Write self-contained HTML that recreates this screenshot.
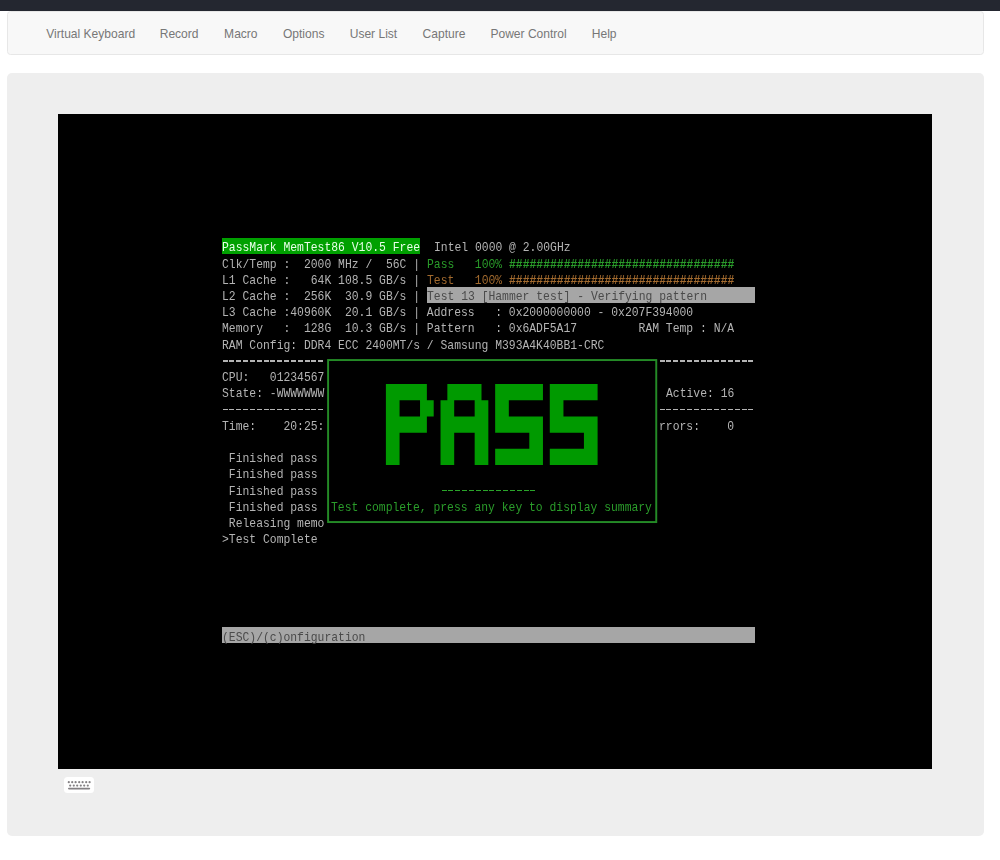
<!DOCTYPE html>
<html><head><meta charset="utf-8">
<style>
html,body{margin:0;padding:0;background:#fff;width:1000px;height:860px;overflow:hidden;position:relative}
#topbar{position:absolute;left:0;top:0;width:1000px;height:10.7px;background:#242730;border-bottom:0 solid #1f212c}
#nav{position:absolute;left:7px;top:10.9px;width:976.5px;height:44.6px;box-sizing:border-box;background:#f8f8f8;border:1px solid #e7e7e7;border-radius:3.5px}
.nl{position:absolute;top:1.5px;height:43px;line-height:43px;font-family:"Liberation Sans",sans-serif;font-size:12.05px;color:#777;white-space:nowrap}
#panel{position:absolute;left:7px;top:72.5px;width:976.5px;height:763.2px;background:#eee;border-radius:5px}
#screen{position:absolute;left:58.2px;top:113.8px;width:874.1px;height:655.4px;background:#000}
.ln{position:absolute;height:16.22px;line-height:16.22px;font-family:"Liberation Mono",monospace;font-size:13.3px;white-space:pre;overflow:visible}
.ln span{display:inline-block;transform-origin:0 0;position:relative;top:2.4px}
#txt{position:absolute;left:0;top:0;width:1000px;height:860px;filter:blur(0.3px)}
#all{position:absolute;left:0;top:0;width:1000px;height:860px}
#kb{position:absolute;left:63.8px;top:777px;width:30.2px;height:15.8px;background:#fff;border-radius:3.5px}
</style></head><body>
<div id="all">
<div id="topbar"></div>
<div id="nav">
<div class="nl" style="left:38.3px">Virtual Keyboard</div>
<div class="nl" style="left:151.7px">Record</div>
<div class="nl" style="left:216.1px">Macro</div>
<div class="nl" style="left:274.9px">Options</div>
<div class="nl" style="left:341.7px">User List</div>
<div class="nl" style="left:414.6px">Capture</div>
<div class="nl" style="left:482.4px">Power Control</div>
<div class="nl" style="left:583.8px">Help</div>
</div>
<div id="panel"></div>
<div id="screen"></div>
<div id="txt">
<div class="ln" style="left:222.00px;top:238.00px;width:198.04px;color:#e8ffe8;background:#00a000;"><span style="transform:scaleX(0.8558)">PassMark&#160;MemTest86&#160;V10.5&#160;Free</span></div>
<div class="ln" style="left:433.70px;top:238.00px;width:136.58px;color:#b4b4b4;"><span style="transform:scaleX(0.8558)">Intel&#160;0000&#160;@&#160;2.00GHz</span></div>
<div class="ln" style="left:222.00px;top:254.22px;width:198.04px;color:#b4b4b4;"><span style="transform:scaleX(0.8558)">Clk/Temp&#160;:&#160;&#160;2000&#160;MHz&#160;/&#160;&#160;56C&#160;|</span></div>
<div class="ln" style="left:426.87px;top:254.22px;width:75.12px;color:#2a9c2a;"><span style="transform:scaleX(0.8558)">Pass&#160;&#160;&#160;100%</span></div>
<div class="ln" style="left:508.82px;top:254.22px;width:225.36px;color:#2a9c2a;font-weight:bold;"><span style="transform:scaleX(0.8558)">#################################</span></div>
<div class="ln" style="left:222.00px;top:270.44px;width:198.04px;color:#b4b4b4;"><span style="transform:scaleX(0.8558)">L1&#160;Cache&#160;:&#160;&#160;&#160;64K&#160;108.5&#160;GB/s&#160;|</span></div>
<div class="ln" style="left:426.87px;top:270.44px;width:75.12px;color:#a26a2e;"><span style="transform:scaleX(0.8558)">Test&#160;&#160;&#160;100%</span></div>
<div class="ln" style="left:508.82px;top:270.44px;width:225.36px;color:#a26a2e;font-weight:bold;"><span style="transform:scaleX(0.8558)">#################################</span></div>
<div class="ln" style="left:222.00px;top:286.66px;width:198.04px;color:#b4b4b4;"><span style="transform:scaleX(0.8558)">L2&#160;Cache&#160;:&#160;&#160;256K&#160;&#160;30.9&#160;GB/s&#160;|</span></div>
<div class="ln" style="left:426.87px;top:286.66px;width:327.79px;color:#4a4a4a;background:#a6a6a6;"><span style="transform:scaleX(0.8558)">Test&#160;13&#160;[Hammer&#160;test]&#160;-&#160;Verifying&#160;pattern&#160;&#160;&#160;&#160;&#160;&#160;&#160;</span></div>
<div class="ln" style="left:222.00px;top:302.88px;width:471.20px;color:#b4b4b4;"><span style="transform:scaleX(0.8558)">L3&#160;Cache&#160;:40960K&#160;&#160;20.1&#160;GB/s&#160;|&#160;Address&#160;&#160;&#160;:&#160;0x2000000000&#160;-&#160;0x207F394000</span></div>
<div class="ln" style="left:222.00px;top:319.10px;width:512.17px;color:#b4b4b4;"><span style="transform:scaleX(0.8558)">Memory&#160;&#160;&#160;:&#160;&#160;128G&#160;&#160;10.3&#160;GB/s&#160;|&#160;Pattern&#160;&#160;&#160;:&#160;0x6ADF5A17&#160;&#160;&#160;&#160;&#160;&#160;&#160;&#160;&#160;RAM&#160;Temp&#160;:&#160;N/A</span></div>
<div class="ln" style="left:222.00px;top:335.32px;width:382.42px;color:#b4b4b4;"><span style="transform:scaleX(0.8558)">RAM&#160;Config:&#160;DDR4&#160;ECC&#160;2400MT/s&#160;/&#160;Samsung&#160;M393A4K40BB1-CRC</span></div>
<div class="ln" style="left:222.00px;top:367.76px;width:102.44px;color:#b4b4b4;"><span style="transform:scaleX(0.8558)">CPU:&#160;&#160;&#160;01234567</span></div>
<div class="ln" style="left:222.00px;top:383.98px;width:102.44px;color:#b4b4b4;"><span style="transform:scaleX(0.8558)">State:&#160;-WWWWWWW</span></div>
<div class="ln" style="left:665.88px;top:383.98px;width:68.29px;color:#b4b4b4;"><span style="transform:scaleX(0.8558)">Active:&#160;16</span></div>
<div class="ln" style="left:222.00px;top:416.42px;width:102.44px;color:#b4b4b4;"><span style="transform:scaleX(0.8558)">Time:&#160;&#160;&#160;&#160;20:25:</span></div>
<div class="ln" style="left:659.06px;top:416.42px;width:75.12px;color:#b4b4b4;"><span style="transform:scaleX(0.8558)">rrors:&#160;&#160;&#160;&#160;0</span></div>
<div class="ln" style="left:222.00px;top:448.86px;width:95.61px;color:#b4b4b4;"><span style="transform:scaleX(0.8558)">&#160;Finished&#160;pass</span></div>
<div class="ln" style="left:222.00px;top:465.08px;width:95.61px;color:#b4b4b4;"><span style="transform:scaleX(0.8558)">&#160;Finished&#160;pass</span></div>
<div class="ln" style="left:222.00px;top:481.30px;width:95.61px;color:#b4b4b4;"><span style="transform:scaleX(0.8558)">&#160;Finished&#160;pass</span></div>
<div class="ln" style="left:222.00px;top:497.52px;width:95.61px;color:#b4b4b4;"><span style="transform:scaleX(0.8558)">&#160;Finished&#160;pass</span></div>
<div class="ln" style="left:222.00px;top:513.74px;width:102.44px;color:#b4b4b4;"><span style="transform:scaleX(0.8558)">&#160;Releasing&#160;memo</span></div>
<div class="ln" style="left:222.00px;top:529.96px;width:95.61px;color:#b4b4b4;"><span style="transform:scaleX(0.8558)">&gt;Test&#160;Complete</span></div>
<div class="ln" style="left:331.26px;top:497.52px;width:320.96px;color:#2a9c2a;"><span style="transform:scaleX(0.8558)">Test&#160;complete,&#160;press&#160;any&#160;key&#160;to&#160;display&#160;summary</span></div>
<div class="ln" style="left:222.00px;top:627.28px;width:532.66px;color:#4a4a4a;background:#a6a6a6;"><span style="transform:scaleX(0.8558)">(ESC)/(c)onfiguration&#160;&#160;&#160;&#160;&#160;&#160;&#160;&#160;&#160;&#160;&#160;&#160;&#160;&#160;&#160;&#160;&#160;&#160;&#160;&#160;&#160;&#160;&#160;&#160;&#160;&#160;&#160;&#160;&#160;&#160;&#160;&#160;&#160;&#160;&#160;&#160;&#160;&#160;&#160;&#160;&#160;&#160;&#160;&#160;&#160;&#160;&#160;&#160;&#160;&#160;&#160;&#160;&#160;&#160;&#160;&#160;&#160;</span></div>
<div style="position:absolute;left:222.00px;top:360.09px;width:102.44px;height:1.5px;background:repeating-linear-gradient(90deg,transparent 0,transparent 0.6px,#b4b4b4 0.6px,#b4b4b4 5.6px,transparent 5.6px,transparent 6.829px)"></div>
<div style="position:absolute;left:659.06px;top:360.09px;width:95.61px;height:1.5px;background:repeating-linear-gradient(90deg,transparent 0,transparent 0.6px,#b4b4b4 0.6px,#b4b4b4 5.6px,transparent 5.6px,transparent 6.829px)"></div>
<div style="position:absolute;left:222.00px;top:408.75px;width:102.44px;height:1.5px;background:repeating-linear-gradient(90deg,transparent 0,transparent 0.6px,#b4b4b4 0.6px,#b4b4b4 5.6px,transparent 5.6px,transparent 6.829px)"></div>
<div style="position:absolute;left:659.06px;top:408.75px;width:95.61px;height:1.5px;background:repeating-linear-gradient(90deg,transparent 0,transparent 0.6px,#b4b4b4 0.6px,#b4b4b4 5.6px,transparent 5.6px,transparent 6.829px)"></div>
<div style="position:absolute;left:440.53px;top:489.85px;width:95.61px;height:1.5px;background:repeating-linear-gradient(90deg,transparent 0,transparent 0.6px,#2aa52a 0.6px,#2aa52a 5.6px,transparent 5.6px,transparent 6.829px)"></div>
</div>
<svg style="position:absolute;left:0;top:0" width="1000" height="860" fill="#009a00">
<path d="M385.90 383.98h40.97v16.22h-40.97zM385.90 400.20h13.66v16.22h-13.66zM420.04 400.20h13.66v16.22h-13.66zM385.90 416.42h40.97v16.22h-40.97zM385.90 432.64h13.66v16.22h-13.66zM385.90 448.86h13.66v16.22h-13.66zM447.36 383.98h34.14v16.22h-34.14zM440.53 400.20h13.66v16.22h-13.66zM474.67 400.20h13.66v16.22h-13.66zM440.53 416.42h47.80v16.22h-47.80zM440.53 432.64h13.66v16.22h-13.66zM474.67 432.64h13.66v16.22h-13.66zM440.53 448.86h13.66v16.22h-13.66zM474.67 448.86h13.66v16.22h-13.66zM495.16 383.98h47.80v16.22h-47.80zM495.16 400.20h13.66v16.22h-13.66zM495.16 416.42h47.80v16.22h-47.80zM529.31 432.64h13.66v16.22h-13.66zM495.16 448.86h47.80v16.22h-47.80zM549.79 383.98h47.80v16.22h-47.80zM549.79 400.20h13.66v16.22h-13.66zM549.79 416.42h47.80v16.22h-47.80zM583.94 432.64h13.66v16.22h-13.66zM549.79 448.86h47.80v16.22h-47.80z"/>
<rect x="328.10" y="360.05" width="328.14" height="162.00" fill="none" stroke="#248a26" stroke-width="1.95"/>
</svg>
<div id="kb">
<svg width="30.2" height="15.8" style="position:absolute;left:0;top:0" fill="#838083">
<circle cx="4.80" cy="5.20" r="1.1"/><circle cx="8.20" cy="5.20" r="1.1"/><circle cx="11.60" cy="5.20" r="1.1"/><circle cx="15.20" cy="5.20" r="1.1"/><circle cx="18.60" cy="5.20" r="1.1"/><circle cx="22.20" cy="5.20" r="1.1"/><circle cx="25.60" cy="5.20" r="1.1"/>
<circle cx="6.20" cy="8.60" r="1.1"/><circle cx="9.80" cy="8.60" r="1.1"/><circle cx="13.20" cy="8.60" r="1.1"/><circle cx="16.80" cy="8.60" r="1.1"/><circle cx="20.20" cy="8.60" r="1.1"/><circle cx="23.80" cy="8.60" r="1.1"/>
<rect x="4.00" y="10.80" width="22.2" height="1.6" rx="0.8"/>
</svg>
</div>
</div>
</body></html>
